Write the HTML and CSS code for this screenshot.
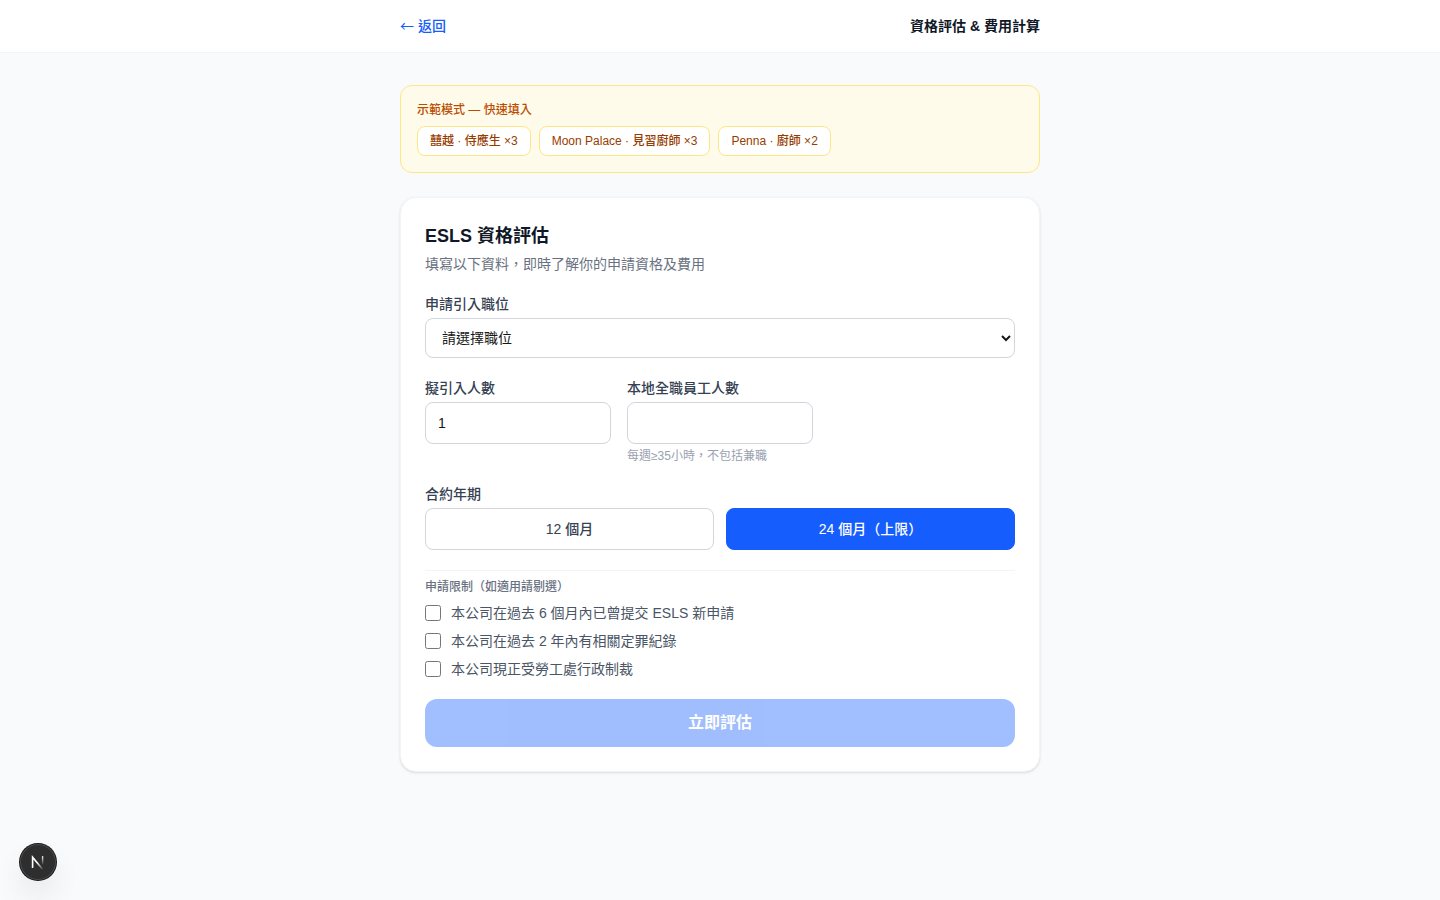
FILE: index.html
```html
<!DOCTYPE html>
<html lang="zh-HK">
<head>
<meta charset="utf-8">
<meta name="viewport" content="width=device-width, initial-scale=1">
<title>資格評估 &amp; 費用計算</title>
<link rel="stylesheet" href="styles.css">
</head>
<body>
<header class="topbar">
  <div class="topbar-inner">
    <a class="back" href="#"><span class="arrow">←</span> 返回</a>
    <span class="topbar-title">資格評估 &amp; 費用計算</span>
  </div>
</header>
<main class="page">
  <section class="demo">
    <p class="demo-title">示範模式 — 快速填入</p>
    <div class="demo-list">
      <button type="button" class="demo-button">囍越 · 侍應生 ×3</button>
      <button type="button" class="demo-button">Moon Palace · 見習廚師 ×3</button>
      <button type="button" class="demo-button">Penna · 廚師 ×2</button>
    </div>
  </section>
  <form class="card">
    <div>
      <h1 class="card-title">ESLS 資格評估</h1>
      <p class="card-subtitle">填寫以下資料，即時了解你的申請資格及費用</p>
    </div>
    <div class="field">
      <label class="label" for="position">申請引入職位</label>
      <select class="control select" id="position">
        <option>請選擇職位</option>
      </select>
    </div>
    <div class="columns">
      <div class="field">
        <label class="label" for="headcount">擬引入人數</label>
        <input class="control" id="headcount" type="number" min="1" value="1">
      </div>
      <div class="field">
        <label class="label" for="local-staff">本地全職員工人數</label>
        <input class="control" id="local-staff" type="number" min="0" aria-describedby="local-hint">
        <p class="hint" id="local-hint">每週≥35小時，不包括兼職</p>
      </div>
    </div>
    <div class="field" role="group" aria-labelledby="term">
      <span class="label" id="term">合約年期</span>
      <div class="terms">
        <button type="button" class="term" aria-pressed="false">12 個月</button>
        <button type="button" class="term term-active" aria-pressed="true">24 個月（上限）</button>
      </div>
    </div>
    <div class="limits" role="group" aria-labelledby="limits">
      <p class="limits-title" id="limits">申請限制（如適用請剔選）</p>
      <label class="check"><input class="checkbox" type="checkbox">本公司在過去 6 個月內已曾提交 ESLS 新申請</label>
      <label class="check"><input class="checkbox" type="checkbox">本公司在過去 2 年內有相關定罪紀錄</label>
      <label class="check"><input class="checkbox" type="checkbox">本公司現正受勞工處行政制裁</label>
    </div>
    <button type="submit" class="submit" disabled>立即評估</button>
  </form>
</main>
<button type="button" class="devtools" aria-label="Next.js">
  <svg width="36" height="36" viewBox="0 0 36 36" fill="none" aria-hidden="true">
    <defs>
      <linearGradient id="diagonal" x1="18" y1="18" x2="24" y2="25" gradientUnits="userSpaceOnUse">
        <stop stop-color="#fff"/><stop offset="1" stop-color="#fff" stop-opacity="0"/>
      </linearGradient>
      <linearGradient id="stem" x1="22" y1="12" x2="22" y2="21" gradientUnits="userSpaceOnUse">
        <stop stop-color="#fff"/><stop offset="1" stop-color="#fff" stop-opacity="0"/>
      </linearGradient>
    </defs>
    <path d="M12.6 24V13.2L22.8 25.6" stroke="url(#diagonal)" stroke-width="1.6"/>
    <path d="M22.6 12.2V21" stroke="url(#stem)" stroke-width="1.4"/>
  </svg>
</button>
</body>
</html>
```
FILE: styles.css
```css
*, *::before, *::after { box-sizing: border-box; }
body {
  margin: 0;
  min-height: 100vh;
  background: #f9fafb;
  color: #171717;
  font-family: "Liberation Sans", "Noto Sans CJK TC", sans-serif;
  font-size: 14px;
  line-height: 20px;
}
h1, p { margin: 0; }
button, input, select { font: inherit; color: inherit; margin: 0; }
.topbar { background: #fff; border-bottom: 1px solid #f3f4f6; }
.topbar-inner {
  display: flex;
  align-items: center;
  justify-content: space-between;
  max-width: 640px;
  margin: 0 auto;
  padding: 16px 0;
}
.back { color: #155dfc; font-weight: 500; text-decoration: none; }
.arrow { font-family: "Noto Sans CJK TC", sans-serif; font-weight: 400; line-height: 1; }
.topbar-title { color: #101828; font-weight: 600; }
.page { max-width: 640px; margin: 0 auto; padding: 32px 0; }
.demo {
  margin-bottom: 24px;
  padding: 16px;
  border: 1px solid #fee685;
  border-radius: 12px;
  background: #fffbeb;
  font-size: 12px;
  line-height: 16px;
  font-weight: 500;
}
.demo-title { margin-bottom: 8px; color: #bb4d00; }
.demo-list { display: flex; flex-wrap: wrap; gap: 8px; }
.demo-button {
  padding: 6px 12px;
  border: 1px solid #fee685;
  border-radius: 8px;
  background: #fff;
  color: #973c00;
}
.card {
  display: flex;
  flex-direction: column;
  gap: 20px;
  padding: 24px;
  border: 1px solid #f3f4f6;
  border-radius: 16px;
  background: #fff;
  box-shadow: 0 1px 3px rgb(0 0 0 / 10%), 0 1px 2px -1px rgb(0 0 0 / 10%);
}
.card-title { margin-bottom: 4px; color: #101828; font-size: 18px; line-height: 28px; font-weight: 700; }
.card-subtitle { color: #6a7282; }
.label { display: block; margin-bottom: 4px; color: #364153; font-weight: 500; }
.control {
  display: block;
  width: 100%;
  height: 42px;
  padding: 10px 12px;
  border: 1px solid #d1d5dc;
  border-radius: 8px;
  background: #fff;
}
.select { height: 40px; }
.columns { display: grid; grid-template-columns: repeat(3, 1fr); gap: 16px; }
.hint { margin-top: 4px; color: #99a1af; font-size: 12px; line-height: 16px; }
.terms { display: grid; grid-template-columns: 1fr 1fr; gap: 12px; }
.term {
  padding: 10px;
  border: 1px solid #d1d5dc;
  border-radius: 8px;
  background: #fff;
  color: #364153;
  font-weight: 500;
}
.term-active { border-color: #155dfc; background: #155dfc; color: #fff; }
.limits {
  display: flex;
  flex-direction: column;
  gap: 8px;
  padding-top: 8px;
  border-top: 1px solid #f3f4f6;
}
.limits-title { color: #6a7282; font-size: 12px; line-height: 16px; font-weight: 500; }
.check { display: flex; align-items: center; gap: 10px; color: #4a5565; }
.checkbox { width: 16px; height: 16px; }
.submit {
  padding: 12px;
  border: 0;
  border-radius: 12px;
  background: #155dfc;
  color: #fff;
  font-size: 16px;
  line-height: 24px;
  font-weight: 600;
  opacity: 0.4;
}
.devtools {
  position: fixed;
  left: 20px;
  bottom: 20px;
  display: grid;
  place-items: center;
  width: 36px;
  height: 36px;
  padding: 0;
  border: 0;
  border-radius: 50%;
  background: #2e2e2e;
  box-shadow: 0 0 0 1px #171717, inset 0 0 0 1px rgb(255 255 255 / 14%), 0 16px 32px -8px rgb(0 0 0 / 24%);
}
```
